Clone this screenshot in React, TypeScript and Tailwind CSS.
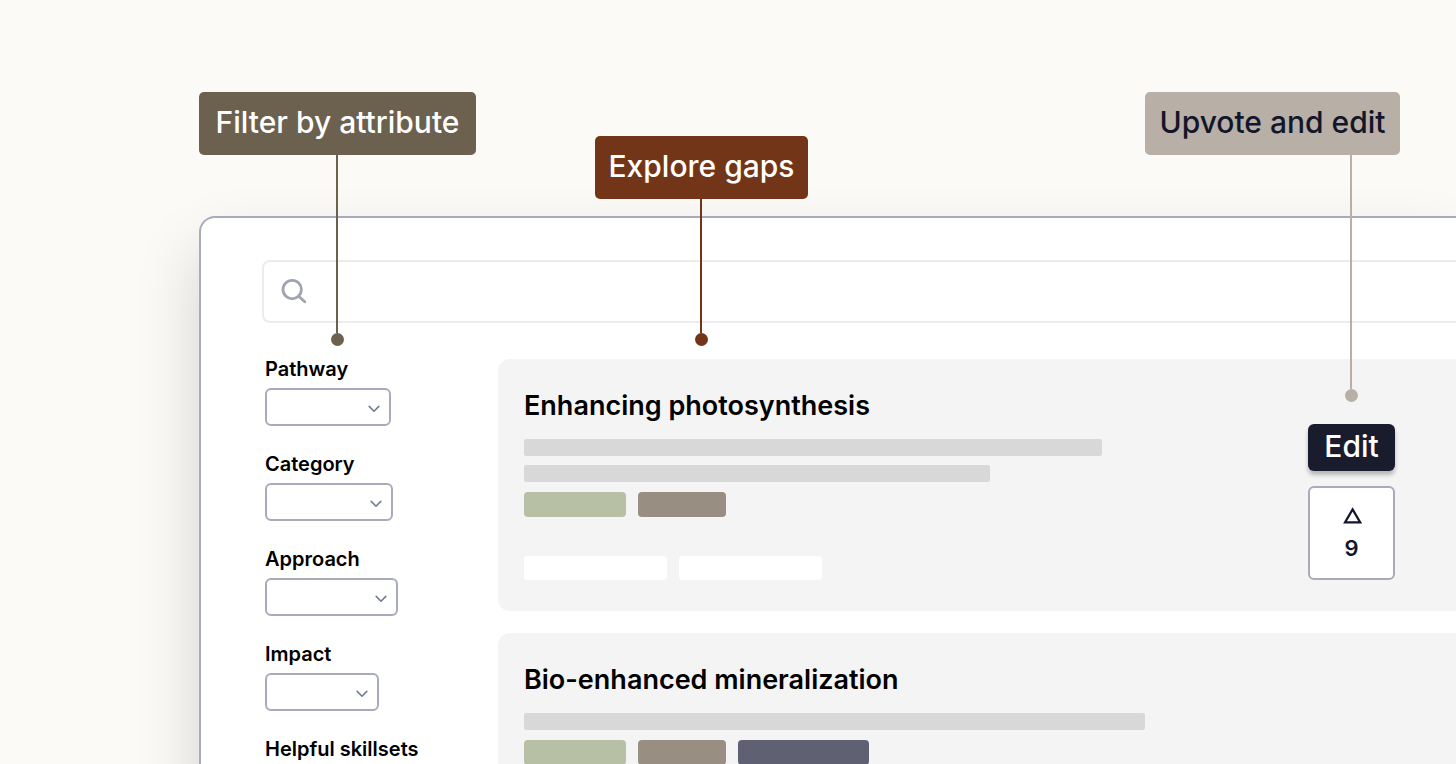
import React from "react";
import { clsx } from "clsx";

interface Filter {
  label: string;
  width: string;
}

interface Gap {
  title: string;
  lines: string[];
  tags: string[];
  links: string[];
  votes?: number;
}

const filters: Filter[] = [
  { label: "Pathway", width: "w-[126px]" },
  { label: "Category", width: "w-[128px]" },
  { label: "Approach", width: "w-[133px]" },
  { label: "Impact", width: "w-[114px]" },
  { label: "Helpful skillsets", width: "w-[133px]" },
];

const gaps: Gap[] = [
  {
    title: "Enhancing photosynthesis",
    lines: ["w-[578px]", "w-[466px]"],
    tags: ["w-[102px] bg-[#b7c0a5]", "w-[88px] bg-[#998e82]"],
    links: ["w-[143px]", "w-[143px]"],
    votes: 9,
  },
  {
    title: "Bio-enhanced mineralization",
    lines: ["w-[621px]"],
    tags: [
      "w-[102px] bg-[#b7c0a5]",
      "w-[88px] bg-[#998e82]",
      "w-[131px] bg-[#5f6173]",
    ],
    links: [],
  },
];

interface CalloutProps {
  text: string;
  position: string;
  box: string;
  line: string;
  stem: string;
  align?: string;
}

// Label with a stem and a dot that points at a part of the panel
const Callout: React.FC<CalloutProps> = ({
  text,
  position,
  box,
  line,
  stem,
  align = "items-center",
}) => (
  <div className={clsx("absolute flex flex-col", position)}>
    <p
      className={clsx(
        "flex h-[63px] items-center justify-center whitespace-nowrap rounded-[5px] pb-0.5 text-[30px] font-medium",
        box
      )}
    >
      {text}
    </p>
    <div className={clsx("flex flex-col", align)}>
      <div className="flex flex-col items-start">
        <span className={clsx("ml-[5px] w-0.5", stem, line)} />
        <span className={clsx("size-[13px] rounded-full", line)} />
      </div>
    </div>
  </div>
);

const FilterSelect: React.FC<{ filter: Filter }> = ({ filter }) => {
  const id = filter.label.toLowerCase().replace(" ", "-");

  return (
    <div>
      <label
        htmlFor={id}
        className="block whitespace-nowrap text-[20px] font-semibold leading-5"
      >
        {filter.label}
      </label>
      <div className={clsx("relative mt-[9px]", filter.width)}>
        <select
          id={id}
          className="block h-[38px] w-full appearance-none rounded-md border-2 border-[#a8abbc] bg-white px-3"
        >
          <option value=""></option>
        </select>
        <svg
          className="pointer-events-none absolute right-[11px] top-[17px] h-2 w-3"
          viewBox="0 0 12 8"
          fill="none"
          stroke="#6f7c93"
          strokeWidth="1.6"
          strokeLinecap="round"
          strokeLinejoin="round"
          aria-hidden="true"
        >
          <path d="M1.2 1.4 6 6.2l4.8-4.8" />
        </svg>
      </div>
    </div>
  );
};

const GapCard: React.FC<{ gap: Gap }> = ({ gap }) => (
  <article className="flex justify-between rounded-l-xl bg-[#f4f4f4] pl-[26px] pr-[61px]">
    <div className="pb-[31px] pt-[27px]">
      <h2 className="text-[27px] font-semibold leading-10">{gap.title}</h2>

      <div className="mt-[13px] flex flex-col gap-[9px]">
        {gap.lines.map((width, i) => (
          <div key={i} className={clsx("h-[17px] rounded-xs bg-[#d8d8d8]", width)} />
        ))}
      </div>

      <div className="mt-2.5 flex gap-3">
        {gap.tags.map((tag, i) => (
          <div key={i} className={clsx("h-[25px] rounded-[4px]", tag)} />
        ))}
      </div>

      {gap.links.length > 0 && (
        <div className="mt-[39px] flex gap-3">
          {gap.links.map((width, i) => (
            <div key={i} className={clsx("h-6 rounded-[4px] bg-white", width)} />
          ))}
        </div>
      )}
    </div>

    {gap.votes !== undefined && (
      <div className="flex w-[87px] flex-col gap-[15px] pt-[65px]">
        <button className="h-[47px] rounded-md bg-[#191c2c] pb-1 text-[30px] font-medium leading-none text-white shadow-[0_4px_4px_rgba(0,0,0,0.25)]">
          Edit
        </button>
        <button
          aria-label={`Upvote, ${gap.votes} votes`}
          className="flex h-[94px] flex-col items-center justify-center gap-2.5 rounded-md border-2 border-[#a8abbc] bg-white pt-0.5 text-[#12162a]"
        >
          <svg
            className="h-[17px] w-5"
            viewBox="0 0 20 17"
            fill="none"
            stroke="currentColor"
            strokeWidth="2.2"
            aria-hidden="true"
          >
            <path d="M10.6 2.4 18.2 15.4H3Z" />
          </svg>
          <span className="text-[22px] font-semibold leading-7">{gap.votes}</span>
        </button>
      </div>
    )}
  </article>
);

const App: React.FC = () => {
  return (
    <div className="relative h-screen overflow-hidden bg-[#fbfaf6] pl-[199px] pt-[216px] font-['Inter','Liberation_Sans',sans-serif] text-black">
      {/* Panel, runs off the right and bottom edges */}
      <main className="rounded-tl-2xl border-l-2 border-t-2 border-[#a8abbc] bg-white pb-10 pl-[61px] pt-[42px] shadow-[0_32px_64px_rgba(0,0,0,0.16)]">
        {/* Search */}
        <div className="relative">
          <input
            type="search"
            aria-label="Search"
            className="block h-[63px] w-full rounded-l-lg border-2 border-r-0 border-[#ececec] bg-white pl-16 text-xl outline-none"
          />
          <svg
            className="pointer-events-none absolute left-[18px] top-[18px] size-7"
            viewBox="0 0 28 28"
            fill="none"
            stroke="#a0a3b0"
            strokeWidth="2.8"
            strokeLinecap="round"
            aria-hidden="true"
          >
            <circle cx="12.2" cy="11.6" r="9.2" />
            <path d="m19 18.4 5.8 5.4" />
          </svg>
        </div>

        <div className="mt-9 flex">
          {/* Filters */}
          <aside className="flex w-[236px] shrink-0 flex-col gap-7 pl-[3px]">
            {filters.map((filter) => (
              <FilterSelect key={filter.label} filter={filter} />
            ))}
          </aside>

          {/* Results */}
          <section className="flex min-w-0 flex-1 flex-col gap-[22px]">
            {gaps.map((gap) => (
              <GapCard key={gap.title} gap={gap} />
            ))}
          </section>
        </div>
      </main>

      {/* Callouts */}
      <Callout
        text="Filter by attribute"
        position="left-[199px] top-[92px] w-[277px]"
        box="bg-[#6c604f] text-white"
        line="bg-[#6c604f]"
        stem="h-[178px]"
      />
      <Callout
        text="Explore gaps"
        position="left-[595px] top-[136px] w-[213px]"
        box="bg-[#733518] text-white"
        line="bg-[#733518]"
        stem="h-[134px]"
      />
      <Callout
        text="Upvote and edit"
        position="right-[56px] top-[92px] w-[255px]"
        box="bg-[#b8b0a6] text-[#12162a]"
        line="bg-[#b8b0a6]"
        stem="h-[234px]"
        align="items-end pr-[42px]"
      />
    </div>
  );
};

export default App;
